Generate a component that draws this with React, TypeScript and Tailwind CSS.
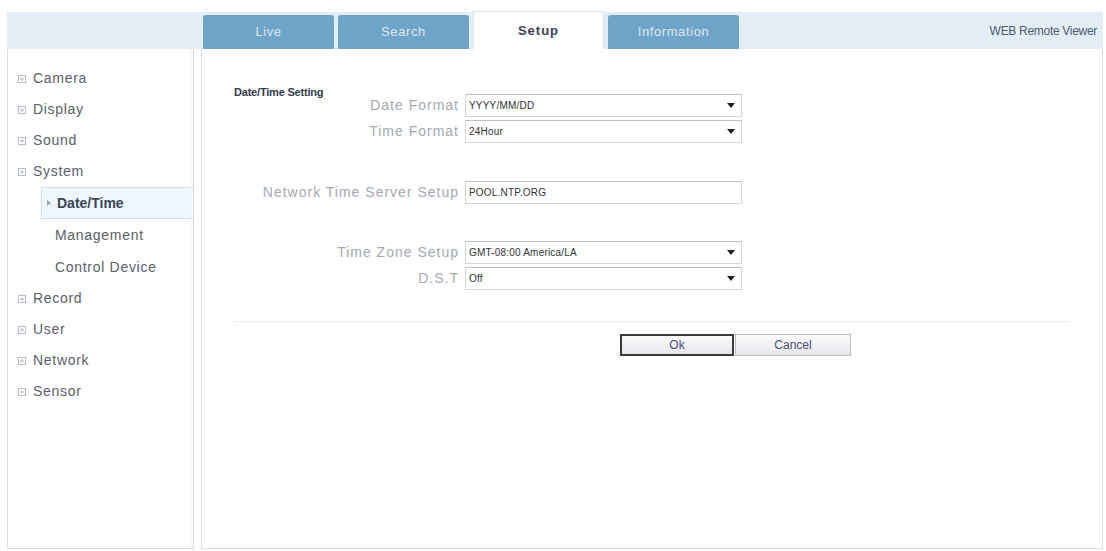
import React from 'react';

const font = { fontFamily: '"Liberation Sans", Arial, sans-serif' };

const tabs = ['Live', 'Search', 'Setup', 'Information'];

const PlusBox = () => (
  <svg width="8" height="8" viewBox="0 0 8 8" className="shrink-0">
    <rect x="0.5" y="0.5" width="7" height="7" fill="none" stroke="#b5bcc3" />
    <path d="M2 4h4M4 2v4" stroke="#b5bcc3" />
  </svg>
);

const Arrow = () => (
  <svg width="8" height="5" viewBox="0 0 8 5" className="shrink-0">
    <path d="M0 0h8L4 5z" fill="#222" />
  </svg>
);

const SideItem = ({ label }: { label: string }) => (
  <div className="h-[31px] flex items-center pl-[10px] gap-[7px] text-[14px] tracking-[0.7px] text-[#5a5e6a]">
    <PlusBox />
    <span>{label}</span>
  </div>
);

const SubItem = ({ label, active = false }: { label: string; active?: boolean }) => {
  if (active) {
    return (
      <div className="h-[32px] ml-[33px] flex items-center pl-[5px] gap-[6px] bg-[#eef7fb] border border-[#cfe0ea] border-r-0 text-[14px] text-[#3d4358] font-bold">
        <svg width="4" height="6" viewBox="0 0 4 6"><path d="M0 0l4 3-4 3z" fill="#9aa8b6" /></svg>
        <span>{label}</span>
      </div>
    );
  }
  return (
    <div className="h-[32px] flex items-center pl-[47px] text-[14px] tracking-[0.7px] text-[#5a5e6a]">{label}</div>
  );
};

const Select = ({ value, arrow = true }: { value: string; arrow?: boolean }) => (
  <div className="w-[277px] h-[23px] flex items-center justify-between border border-[#d6d6d6] border-t-[#bdbdbd] bg-white pl-[3px] pr-[6px] text-[10px] tracking-[0.2px] text-[#333]">
    <span>{value}</span>
    {arrow && <Arrow />}
  </div>
);

const Row = ({ label, children }: { label: string; children: React.ReactNode }) => (
  <div className="flex items-center gap-[6px]">
    <div className="w-[225px] text-right text-[14px] tracking-[1px] text-[#a3a9b0]">{label}</div>
    {children}
  </div>
);

export default function App() {
  return (
    <div style={font} className="w-[1106px] h-[551px] bg-white pt-[12px] pl-[7px] pr-[3px] flex flex-col">
      {/* top bar */}
      <div className="h-[37px] bg-[#e3edf5] flex items-end shrink-0">
        <div className="w-[196px]" />
        <div className="flex items-end gap-[4px]">
          {tabs.map((t) =>
            t === 'Setup' ? (
              <div key={t} className="w-[131px] h-[38px] bg-white border-t border-x border-[#dfe4e8] flex items-center justify-center text-[13px] tracking-[1px] font-bold text-[#3c4156]">
                {t}
              </div>
            ) : (
              <div key={t} className="w-[131px] h-[34px] bg-[#6fa4c8] rounded-t-[3px] flex items-center justify-center text-[13px] tracking-[0.6px] text-[#dbe8f2]">
                {t}
              </div>
            )
          )}
        </div>
        <div className="flex-1 h-full flex items-center justify-end pr-[6px] text-[12px] tracking-[-0.3px] text-[#4e5c72]">
          WEB Remote Viewer
        </div>
      </div>

      {/* body */}
      <div className="flex-1 flex gap-[7px] pb-[2px]">
        <div className="w-[187px] border-x border-b border-[#d9dde0] bg-white pt-[14px] shadow-[inset_-3px_0_3px_rgba(0,0,0,0.03)]">
          <SideItem label="Camera" />
          <SideItem label="Display" />
          <SideItem label="Sound" />
          <SideItem label="System" />
          <SubItem label="Date/Time" active />
          <SubItem label="Management" />
          <SubItem label="Control Device" />
          <SideItem label="Record" />
          <SideItem label="User" />
          <SideItem label="Network" />
          <SideItem label="Sensor" />
        </div>

        <div className="flex-1 border-x border-b border-[#d9dde0] bg-white pt-[36px] pl-[32px] pr-[33px]">
          <div className="h-[14px] leading-[14px] text-[11px] tracking-[-0.2px] font-bold text-[#333a4a] mb-[-5px]">Date/Time Setting</div>
          <div className="flex flex-col gap-[3px]">
            <Row label="Date Format"><Select value="YYYY/MM/DD" /></Row>
            <Row label="Time Format"><Select value="24Hour" /></Row>
          </div>
          <div className="mt-[38px]">
            <Row label="Network Time Server Setup"><Select value="POOL.NTP.ORG" arrow={false} /></Row>
          </div>
          <div className="mt-[37px] flex flex-col gap-[3px]">
            <Row label="Time Zone Setup"><Select value="GMT-08:00 America/LA" /></Row>
            <Row label="D.S.T"><Select value="Off" /></Row>
          </div>
          <div className="mt-[31px] border-t border-dotted border-[#d4d4d4]" />
          <div className="mt-[12px] flex pl-[386px]">
            <button className="w-[114px] h-[22px] border-2 border-[#3a3a3a] bg-gradient-to-b from-[#fbfbfb] to-[#e4e6ea] text-[12px] text-[#4a4d7a]">Ok</button>
            <button className="w-[116px] h-[22px] ml-[1px] border border-[#bcbcbc] bg-gradient-to-b from-[#fbfbfb] to-[#e4e6ea] text-[12px] text-[#4a4d7a]">Cancel</button>
          </div>
        </div>
      </div>
    </div>
  );
}
